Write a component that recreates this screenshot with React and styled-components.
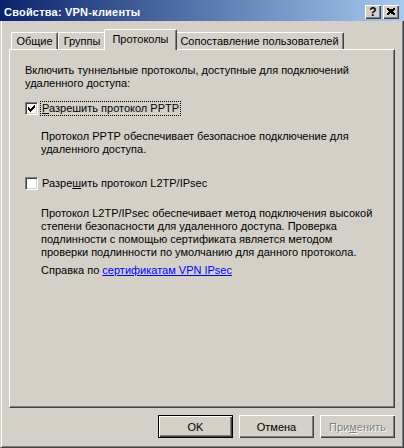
import React from 'react';
import styled, { createGlobalStyle } from 'styled-components';

const FACE = '#d4d0c8';
const SHADOW = '#808080';
const DARK = '#404040';
const BEVEL = `inset 1px 1px #fff, inset -1px -1px ${DARK}, inset -2px -2px ${SHADOW}`;

const GlobalStyle = createGlobalStyle`
  html, body {
    margin: 0;
    padding: 0;
    background: ${FACE};
  }
  body {
    font-family: "Liberation Sans", Arial, sans-serif;
    font-size: 11px;
    color: #000;
  }
`;

const Window = styled.div`
  width: 404px;
  height: 448px;
  display: flex;
  flex-direction: column;
  background: ${FACE};
  overflow: hidden;
`;

const TitleBar = styled.div`
  box-sizing: border-box;
  height: 21px;
  padding: 3px 5px 0 4px;
  display: flex;
  align-items: center;
  background: linear-gradient(to right, #0a246a, #a6caf0);
`;

const Title = styled.div`
  flex: 1;
  color: #fff;
  font-weight: bold;
  font-size: 11px;
  letter-spacing: 0.2px;
  white-space: nowrap;
`;

const CaptionButton = styled.div`
  box-sizing: border-box;
  width: 16px;
  height: 14px;
  margin-left: ${p => p.$gap || 0}px;
  background: ${FACE};
  box-shadow: ${BEVEL};
  display: flex;
  align-items: center;
  justify-content: center;
  font-weight: bold;
  font-size: 12px;
  line-height: 1;
  padding-bottom: 1px;
`;

const Body = styled.div`
  flex: 1;
  box-sizing: border-box;
  display: flex;
  flex-direction: column;
  padding: 8px 8px 9px 8px;
  border-left: 1px solid ${FACE};
  border-right: 1px solid ${DARK};
  border-bottom: 1px solid ${DARK};
  box-shadow: inset 1px 0 #fff, inset -1px -1px ${SHADOW};
`;

const TabStrip = styled.div`
  height: 20px;
  display: flex;
  align-items: flex-end;
  padding-left: 2px;
`;

const Tab = styled.div`
  box-sizing: border-box;
  width: ${p => p.$w}px;
  height: ${p => (p.$active ? 21 : 17)}px;
  margin: 0 ${p => (p.$active ? -2 : 0)}px ${p => (p.$active ? -1 : 0)}px;
  position: relative;
  z-index: ${p => (p.$active ? 2 : 0)};
  background: ${FACE};
  border-left: 1px solid #fff;
  border-top: 1px solid #fff;
  border-right: 1px solid ${DARK};
  border-radius: 2px 2px 0 0;
  box-shadow: inset -1px 0 ${SHADOW};
  display: flex;
  align-items: center;
  justify-content: center;
  padding-bottom: ${p => (p.$active ? 2 : 0)}px;
  white-space: nowrap;
`;

const Panel = styled.div`
  flex: 1;
  position: relative;
  z-index: 1;
  box-sizing: border-box;
  border-top: 1px solid #fff;
  border-left: 1px solid #fff;
  border-right: 1px solid ${DARK};
  border-bottom: 1px solid ${DARK};
  box-shadow: inset -1px -1px ${SHADOW};
  padding: 14px 12px 0 15px;
  display: flex;
  flex-direction: column;
  line-height: 13px;
`;

const Text = styled.div`
  margin-top: ${p => p.$top || 0}px;
  padding-left: ${p => p.$indent || 0}px;
`;

const CheckRow = styled.div`
  height: 15px;
  margin-top: ${p => p.$top}px;
  display: flex;
  align-items: center;
`;

const Box = styled.div`
  box-sizing: border-box;
  width: 13px;
  height: 13px;
  background: #fff;
  border-top: 1px solid ${SHADOW};
  border-left: 1px solid ${SHADOW};
  border-right: 1px solid #fff;
  border-bottom: 1px solid #fff;
  box-shadow: inset 1px 1px ${DARK}, inset -1px -1px ${FACE};
  display: flex;
  align-items: center;
  justify-content: center;
`;

const Label = styled.span`
  margin-left: 2px;
  padding: 0 1px;
  height: 15px;
  line-height: 13px;
  box-sizing: border-box;
  border: 1px dotted ${p => (p.$focus ? '#000' : 'transparent')};
`;

const Key = styled.span`
  text-decoration: underline;
`;

const Link = styled.a`
  color: #0000ff;
  text-decoration: underline;
  cursor: pointer;
`;

const ButtonRow = styled.div`
  display: flex;
  justify-content: flex-end;
  gap: 6px;
  margin-top: 7px;
`;

const Button = styled.div`
  box-sizing: border-box;
  width: 75px;
  height: 23px;
  display: flex;
  align-items: center;
  justify-content: center;
  background: ${FACE};
  border: ${p => (p.$default ? '1px solid #000' : 'none')};
  box-shadow: ${BEVEL};
  color: ${p => (p.$disabled ? SHADOW : '#000')};
  text-shadow: ${p => (p.$disabled ? '1px 1px 0 #fff' : 'none')};
`;

const tabs = [
  { label: 'Общие', w: 47 },
  { label: 'Группы', w: 48 },
  { label: 'Протоколы', w: 73, active: true },
  { label: 'Сопоставление пользователей', w: 169 },
];

export default function App() {
  return (
    <>
      <GlobalStyle />
      <Window>
        <TitleBar>
          <Title>Свойства: VPN-клиенты</Title>
          <CaptionButton>?</CaptionButton>
          <CaptionButton $gap={2}>
            <svg width="8" height="7" viewBox="0 0 8 7">
              <path d="M0 0L8 7M1 0L8 6M0 1L7 7M8 0L0 7M7 0L0 6M8 1L1 7" stroke="#000" strokeWidth="1" shapeRendering="crispEdges" />
            </svg>
          </CaptionButton>
        </TitleBar>
        <Body>
          <TabStrip>
            {tabs.map(t => (
              <Tab key={t.label} $w={t.w} $active={t.active}>
                {t.label}
              </Tab>
            ))}
          </TabStrip>
          <Panel>
            <Text>
              Включить туннельные протоколы, доступные для подключений
              <br />
              удаленного доступа:
            </Text>
            <CheckRow $top={11}>
              <Box>
                <svg width="7" height="7" viewBox="0 0 7 7">
                  <path d="M0 2v3h1v1h1v1h1v-1h1v-1h1v-1h1v-1h1v-3h-1v1h-1v1h-1v1h-1v1h-1v-1h-1v-1h-1z" fill="#000" />
                </svg>
              </Box>
              <Label $focus>
                <Key>Р</Key>азрешить протокол PPTP
              </Label>
            </CheckRow>
            <Text $top={14} $indent={16}>
              Протокол PPTP обеспечивает безопасное подключение для
              <br />
              удаленного доступа.
            </Text>
            <CheckRow $top={20}>
              <Box />
              <Label>
                Разре<Key>ш</Key>ить протокол L2TP/IPsec
              </Label>
            </CheckRow>
            <Text $top={16} $indent={16}>
              Протокол L2TP/IPsec обеспечивает метод подключения высокой
              <br />
              степени безопасности для удаленного доступа. Проверка
              <br />
              подлинности с помощью сертификата является методом
              <br />
              проверки подлинности по умолчанию для данного протокола.
            </Text>
            <Text $top={5} $indent={16}>
              Справка по <Link>сертификатам VPN IPsec</Link>
            </Text>
          </Panel>
          <ButtonRow>
            <Button $default>OK</Button>
            <Button>Отмена</Button>
            <Button $disabled>
              При<Key>м</Key>енить
            </Button>
          </ButtonRow>
        </Body>
      </Window>
    </>
  );
}
